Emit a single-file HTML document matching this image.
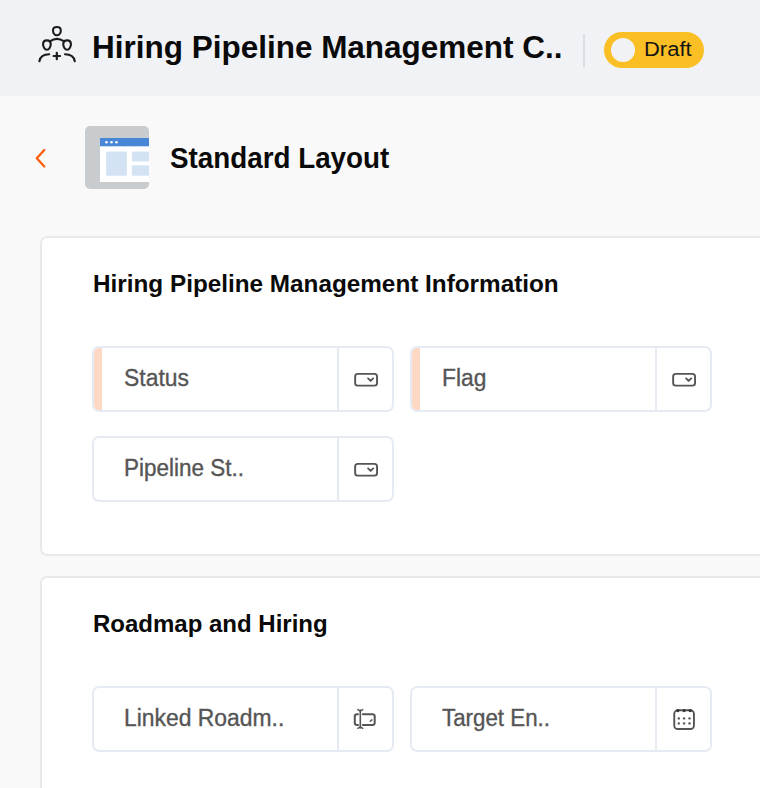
<!DOCTYPE html>
<html>
<head>
<meta charset="utf-8">
<style>
*{box-sizing:border-box;margin:0;padding:0}
html,body{width:760px;height:788px;overflow:hidden;background:#f9f9f9;font-family:"Liberation Sans",sans-serif}
.abs{position:absolute}
#hdr{position:absolute;left:0;top:0;width:760px;height:96px;background:#f1f2f6}
.t{position:absolute;white-space:nowrap;line-height:1;transform-origin:0 0}
.b{font-weight:700;color:#0a0a0a}
.card{position:absolute;left:40px;width:760px;background:#fff;border:2px solid #e9e9e9;border-radius:7px}
.field{position:absolute;width:302px;height:66px;border:2px solid #e6ebf3;border-radius:7px;background:#fff;overflow:hidden}
.field .acc{position:absolute;left:0;top:0;width:8px;height:100%;background:#fdd8c5}
.field .div{position:absolute;left:243px;top:0;width:2px;height:100%;background:#e6ebf3}
.lbl{font-size:23.5px;color:#555;-webkit-text-stroke:0.35px #555}
</style>
</head>
<body>
<div id="hdr"></div>
<div class="abs" style="left:583px;top:34px;width:2px;height:33px;background:#dcdde2"></div>
<div class="abs" style="left:604px;top:32px;width:100px;height:36px;border-radius:18px;background:#fbbf26"></div>
<div class="abs" style="left:611px;top:38px;width:24px;height:24px;border-radius:50%;background:#f1f2f6"></div>

<div class="t b" id="t_hdr" style="left:92.2px;top:32px;font-size:31.8px;transform:scaleX(0.990)">Hiring Pipeline Management C..</div>
<div class="t" id="t_draft" style="left:644px;top:39px;font-size:20px;color:#141414;transform:scaleX(1.098)">Draft</div>

<div class="t b" id="t_std" style="left:170px;top:143px;font-size:29.5px;transform:scaleX(0.942)">Standard Layout</div>

<!-- card 1 -->
<div class="card" style="top:236px;height:320px"></div>
<div class="t b" id="t_c1" style="left:92.5px;top:272px;font-size:24.4px;transform:scaleX(0.996)">Hiring Pipeline Management Information</div>

<div class="field" style="left:92px;top:346px"><div class="acc"></div><div class="div"></div></div>
<div class="field" style="left:410px;top:346px"><div class="acc"></div><div class="div"></div></div>
<div class="field" style="left:92px;top:436px"><div class="div"></div></div>
<div class="t lbl" id="t_status" style="left:124px;top:367px;transform:scaleX(0.975)">Status</div>
<div class="t lbl" id="t_flag" style="left:442px;top:366.6px;transform:scaleX(0.971)">Flag</div>
<div class="t lbl" id="t_pipe" style="left:123.8px;top:456.6px;transform:scaleX(0.956)">Pipeline St..</div>

<!-- card 2 -->
<div class="card" style="top:576px;height:320px"></div>
<div class="t b" id="t_c2" style="left:92.7px;top:612px;font-size:24.4px;transform:scaleX(0.984)">Roadmap and Hiring</div>
<div class="field" style="left:92px;top:686px"><div class="div"></div></div>
<div class="field" style="left:410px;top:686px"><div class="div"></div></div>
<div class="t lbl" id="t_link" style="left:123.8px;top:706.8px;transform:scaleX(0.974)">Linked Roadm..</div>
<div class="t lbl" id="t_target" style="left:441.8px;top:707px;transform:scaleX(0.95)">Target En..</div>

<!-- icon overlay in page coordinates -->
<svg class="abs" style="left:0;top:0" width="760" height="788" viewBox="0 0 760 788">
  <g fill="none" stroke="#1c1c1c" stroke-width="2.1" stroke-linecap="round">
    <path d="M56.9 27.0 C59.24 27.0 60.80 28.50 60.80 30.44 C60.80 32.94 59.05 35.2 56.9 35.2 C54.75 35.2 53.00 32.94 53.00 30.44 C53.00 28.50 54.56 27.0 56.9 27.0 Z"/>
    <path d="M46.9 40.4 C49.21 40.4 50.75 41.90 50.75 44.35 C50.75 46.85 49.02 49.8 46.9 49.8 C44.78 49.8 43.05 46.85 43.05 44.35 C43.05 41.90 44.59 40.4 46.9 40.4 Z"/>
    <path d="M67.1 40.4 C69.41 40.4 70.95 41.90 70.95 44.35 C70.95 46.85 69.22 49.8 67.1 49.8 C64.98 49.8 63.25 46.85 63.25 44.35 C63.25 41.90 64.79 40.4 67.1 40.4 Z"/>
    <path d="M50.2 41.2 Q57 36.6 63.8 41.2"/>
    <path d="M39.4 61.2 Q40.6 54.3 49.2 54.3"/>
    <path d="M74.8 61.2 Q73.6 54.3 65 54.3"/>
    <path d="M53.6 56 H60 M56.8 52.8 V59.2" stroke-width="2.2"/>
  </g>
  <path d="M44.3 150 L36.8 158.3 L44.3 166.5" fill="none" stroke="#fd5e0c" stroke-width="2.3" stroke-linecap="round" stroke-linejoin="round"/>
  <g transform="translate(85 126)">
    <rect x="0" y="0" width="64" height="63" rx="5" fill="#c9cccf"/>
    <rect x="15" y="12" width="49" height="44" fill="#fff"/>
    <rect x="15" y="12" width="49" height="8.3" fill="#4a86d6"/>
    <circle cx="21.5" cy="16.2" r="1.3" fill="#fff"/>
    <circle cx="26.5" cy="16.2" r="1.3" fill="#fff"/>
    <circle cx="31.5" cy="16.2" r="1.3" fill="#fff"/>
    <rect x="21.2" y="25.6" width="20.7" height="24.2" rx="1" fill="#d3e3f3"/>
    <rect x="46.8" y="25.6" width="17.2" height="9.9" rx="1" fill="#d3e3f3"/>
    <rect x="46.8" y="39.2" width="17.2" height="10.6" rx="1" fill="#d3e3f3"/>
  </g>
  <g fill="none" stroke="#555" stroke-width="1.9" stroke-linecap="round" stroke-linejoin="round">
    <g id="dd">
      <rect x="355.15" y="373.85" width="21.9" height="11.8" rx="2.6"/>
      <path d="M368.1 378.4 L370.6 380.9 L373.2 378.4"/>
    </g>
    <use href="#dd" transform="translate(318 0)"/>
    <use href="#dd" transform="translate(0 90)"/>
    <!-- lookup -->
    <path d="M358 714.2 H357 Q354.8 714.2 354.8 716.5 V722.7 Q354.8 725 357 725 H358" stroke-width="2"/>
    <path d="M362.8 714.2 H372.4 Q374.7 714.2 374.7 716.5 V722.7 Q374.7 725 372.4 725 H362.8" stroke-width="2"/>
    <path d="M360.3 710 V728" stroke-width="1.6"/>
    <path d="M357.8 709.6 L360.3 711.2 L362.8 709.6 M357.8 728.4 L360.3 726.8 L362.8 728.4" stroke-width="1.4"/>
    <path d="M370.3 721.3 L371.9 719.9" stroke-width="1.5"/>
    <!-- calendar -->
    <rect x="674.25" y="710.25" width="19.7" height="18.8" rx="3.6"/>
  </g>
  <g fill="#333">
    <circle cx="677.9" cy="710.6" r="1.6"/><circle cx="684.1" cy="710.6" r="1.6"/><circle cx="690.2" cy="710.6" r="1.6"/>
  </g>
  <g fill="#555">
    <circle cx="678.8" cy="718.4" r="1.2"/><circle cx="684.1" cy="718.4" r="1.2"/><circle cx="689.5" cy="718.4" r="1.2"/>
    <circle cx="678.8" cy="723.4" r="1.2"/><circle cx="684.1" cy="723.4" r="1.2"/><circle cx="689.5" cy="723.4" r="1.2"/>
  </g>
</svg>
</body>
</html>
